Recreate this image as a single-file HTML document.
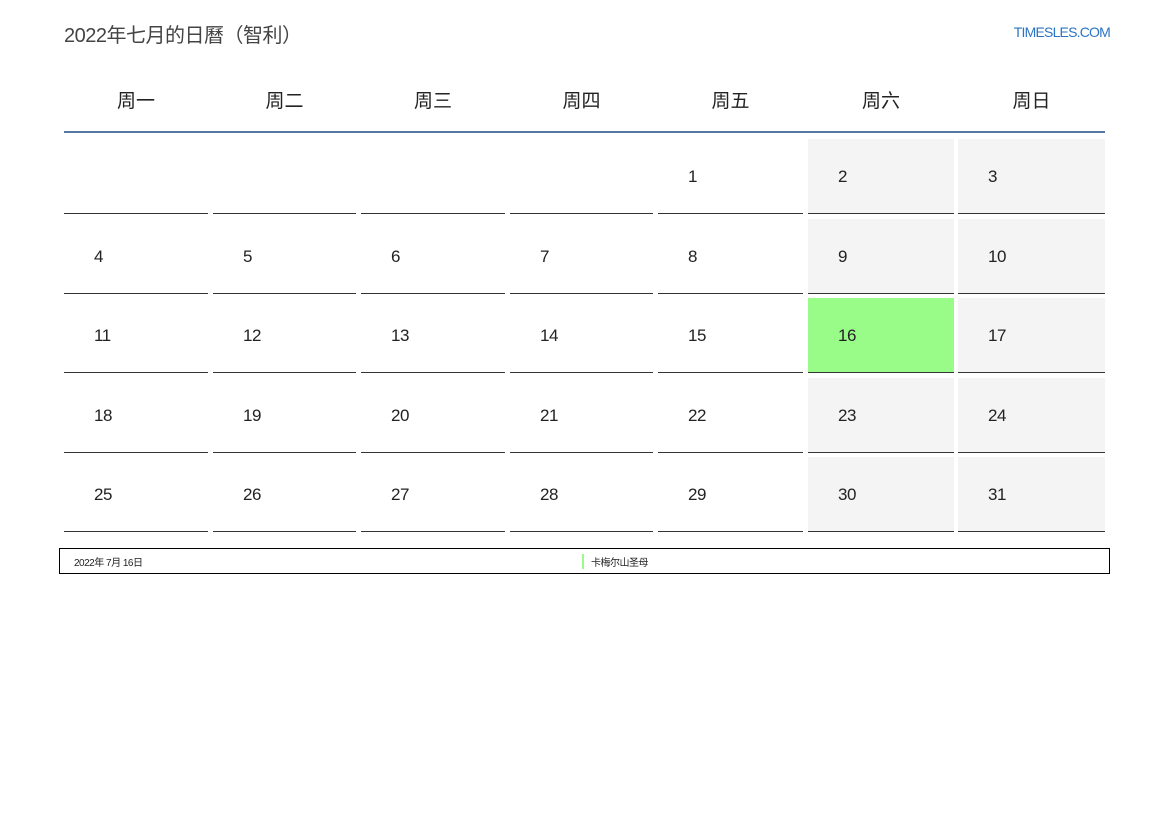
<!DOCTYPE html>
<html><head><meta charset="utf-8"><style>
body{margin:0;width:1169px;height:827px;background:#fff;position:relative;font-family:"Liberation Sans","Noto Sans CJK SC",sans-serif;color:#222;overflow:hidden}
.t{position:absolute;left:64px;top:19px;font-size:20px;color:#444;letter-spacing:-0.5px}
.l{position:absolute;right:59px;top:24px;font-size:14px;color:#2a74c4;letter-spacing:-0.8px}
.h{position:absolute;top:86px;width:144px;text-align:center;font-size:19px;color:#222}
.hl{position:absolute;left:64px;top:131px;width:1041px;height:2px;background:#5477a3}
.c{position:absolute;height:75px;border-bottom:1px solid #333;box-sizing:border-box}
.c span{position:absolute;left:30px;top:28px;font-size:17px;letter-spacing:-0.5px}
.w{background:#f4f4f4}.g{background:#99fb88}
.f{position:absolute;left:59px;top:548px;width:1049px;height:24px;border:1px solid #000;font-size:10px;letter-spacing:-0.5px}
</style></head><body>
<div class="t">2022年七月的日曆（智利）</div>
<div class="l">TIMESLES.COM</div>
<div id="g"></div>
<div class="hl"></div>
<div class="f"><span style="position:absolute;left:14px;top:5px">2022年 7月 16日</span><span style="position:absolute;left:522px;top:5px;border-left:2px solid #99fb88;padding-left:7px">卡梅尔山圣母</span></div>
<script>
var xs=[64,213,361,510,658,808,958],ws=[144,143,144,143,145,146,147],ys=[139,219,298,378,457],hd=["周一","周二","周三","周四","周五","周六","周日"],h="";
for(var i=0;i<7;i++)h+='<div class="h" style="left:'+xs[i]+'px;width:'+ws[i]+'px">'+hd[i]+'</div>';
for(var r=0;r<5;r++)for(var c=0;c<7;c++){var d=r*7+c-3;var cls="c"+(c>=5?" w":"")+(d==16?" g":"");
h+='<div class="'+cls+'" style="left:'+xs[c]+'px;width:'+ws[c]+'px;top:'+ys[r]+'px">'+(d>=1&&d<=31?'<span>'+d+'</span>':'')+'</div>';}
document.getElementById("g").innerHTML=h;
</script>
</body></html>
